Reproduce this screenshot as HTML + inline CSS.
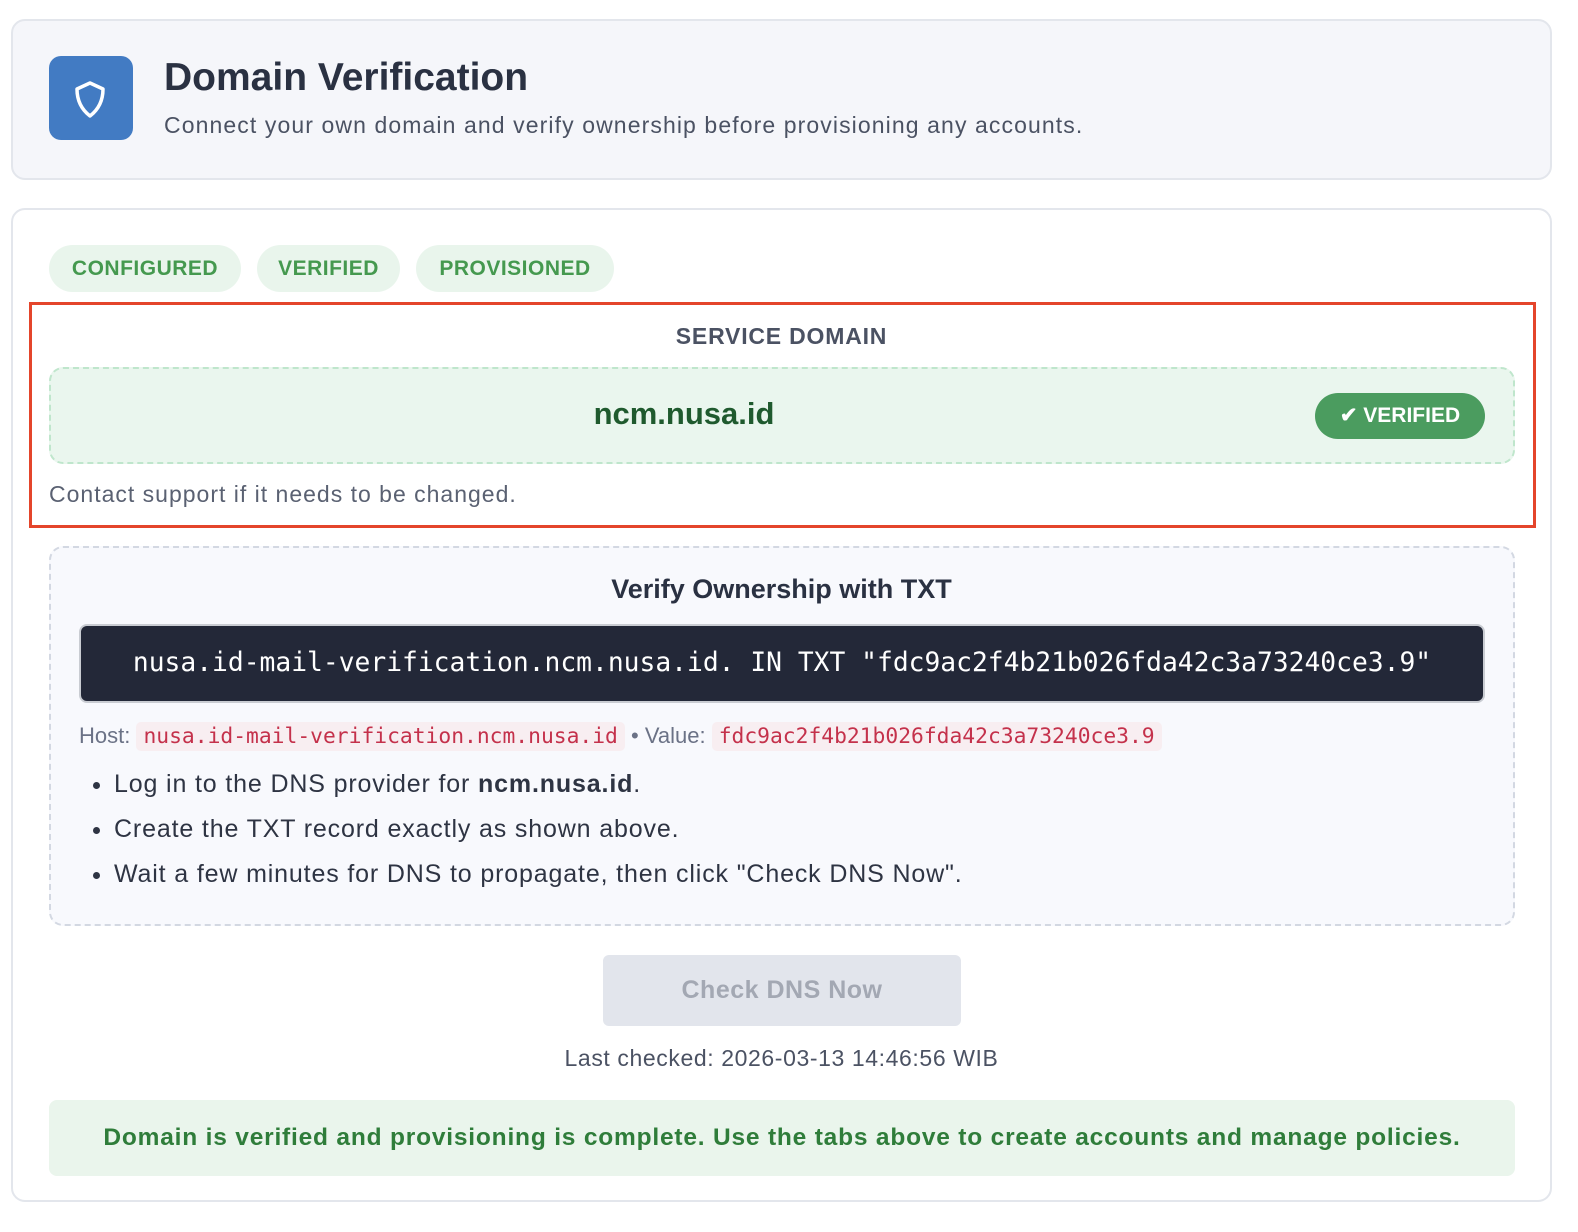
<!DOCTYPE html>
<html><head><meta charset="utf-8">
<style>
*{box-sizing:border-box;margin:0;padding:0}
body{width:1578px;height:1232px;background:#fff;font-family:"Liberation Sans",sans-serif;position:relative;overflow:hidden}
.hdr{position:absolute;left:11px;top:19px;width:1541px;height:161px;background:#f5f6fa;border:2px solid #e3e6ec;border-radius:14px}
.icon{position:absolute;width:84px;height:84px;background:#427bc3;border-radius:12px}
.h1{position:absolute;font-size:39px;font-weight:bold;color:#2a3142}
.sub{position:absolute;font-size:23px;color:#4b5263;letter-spacing:1.1px}
.card{position:absolute;left:11px;top:208px;width:1541px;height:994px;border:2px solid #e3e6ec;border-radius:14px;background:#fff}
.pill{position:absolute;top:245px;height:47px;border-radius:24px;background:#e9f5ec;color:#45994f;font-weight:bold;font-size:21px;line-height:47px;text-align:center;letter-spacing:.5px}
.red{position:absolute;left:29px;top:302px;width:1507px;height:226px;border:3px solid #e4452b}
.t{position:absolute;white-space:nowrap}
.dom{position:absolute;left:49px;top:367px;width:1466px;height:97px;background:#eaf6ee;border:2px dashed #bfe6cc;border-radius:14px}
.vb{position:absolute;left:1315px;top:393px;width:170px;height:46px;border-radius:23px;background:#4b9c5f;color:#fff;font-weight:bold;font-size:21px;line-height:46px;text-align:center}
.box2{position:absolute;left:49px;top:546px;width:1466px;height:380px;background:#f8f9fd;border:2px dashed #d3d8e2;border-radius:14px}
.code{position:absolute;left:79px;top:624px;width:1406px;height:79px;background:#232838;border:2px solid #c9ccd2;border-radius:8px;color:#fff;font-family:"DejaVu Sans Mono","Liberation Mono",monospace;font-size:26.3px;line-height:75px;text-align:center}
.ic{font-family:"DejaVu Sans Mono","Liberation Mono",monospace;font-size:21.3px;color:#c4314b;background:#f8eef1;border-radius:5px;padding:2px 7px}
ul{position:absolute;left:114px;top:762px;font-size:25px;color:#2e3443;line-height:45px;letter-spacing:.85px}
.btn{position:absolute;left:603px;top:955px;width:358px;height:71px;background:#e2e5ec;border-radius:6px;color:#a3a8b3;font-size:25px;line-height:71px;text-align:center;font-weight:bold;letter-spacing:.5px}
.ok{position:absolute;left:49px;top:1100px;width:1466px;height:76px;background:#eaf5ec;border-radius:8px;color:#2f7d3a;font-weight:bold;font-size:24.5px;line-height:76px;text-align:center;letter-spacing:.8px}
</style></head><body>
<div class="hdr"></div>
<div class="icon" style="left:49px;top:56px">
<svg width="84" height="84" viewBox="0 0 84 84"><path d="M41 27 L54 33 Q54 50 41 60 Q28 50 28 33 Z" fill="none" stroke="#fff" stroke-width="3.5" stroke-linejoin="round"/></svg></div>
<div class="h1" style="left:164px;top:56px">Domain Verification</div>
<div class="sub" style="left:164px;top:112px">Connect your own domain and verify ownership before provisioning any accounts.</div>
<div class="card"></div>
<div class="pill" style="left:49px;width:192px">CONFIGURED</div>
<div class="pill" style="left:257px;width:143px">VERIFIED</div>
<div class="pill" style="left:416px;width:198px">PROVISIONED</div>
<div class="red"></div>
<div class="t" style="left:0;width:1563px;text-align:center;top:323px;font-size:23px;font-weight:bold;color:#4b5263;letter-spacing:.8px">SERVICE DOMAIN</div>
<div class="dom"></div>
<div class="t" style="left:49px;width:1270px;text-align:center;top:396px;font-size:31px;font-weight:bold;color:#1f5a2e">ncm.nusa.id</div>
<div class="vb">✔ VERIFIED</div>
<div class="t" style="left:49px;top:481px;font-size:23px;color:#5a6172;letter-spacing:1px">Contact support if it needs to be changed.</div>
<div class="box2"></div>
<div class="t" style="left:0;width:1563px;text-align:center;top:574px;font-size:27px;font-weight:bold;color:#2a3142">Verify Ownership with TXT</div>
<div class="code">nusa.id-mail-verification.ncm.nusa.id. IN TXT "fdc9ac2f4b21b026fda42c3a73240ce3.9"</div>
<div class="t" style="left:79px;top:723px;font-size:22px;color:#6b7286">Host: <span class="ic">nusa.id-mail-verification.ncm.nusa.id</span> • Value: <span class="ic">fdc9ac2f4b21b026fda42c3a73240ce3.9</span></div>
<ul>
<li>Log in to the DNS provider for <b>ncm.nusa.id</b>.</li>
<li>Create the TXT record exactly as shown above.</li>
<li>Wait a few minutes for DNS to propagate, then click "Check DNS Now".</li>
</ul>
<div class="btn">Check DNS Now</div>
<div class="t" style="left:0;width:1563px;text-align:center;top:1045px;font-size:23px;color:#4b5263;letter-spacing:.6px">Last checked: 2026-03-13 14:46:56 WIB</div>
<div class="ok">Domain is verified and provisioning is complete. Use the tabs above to create accounts and manage policies.</div>
</body></html>
